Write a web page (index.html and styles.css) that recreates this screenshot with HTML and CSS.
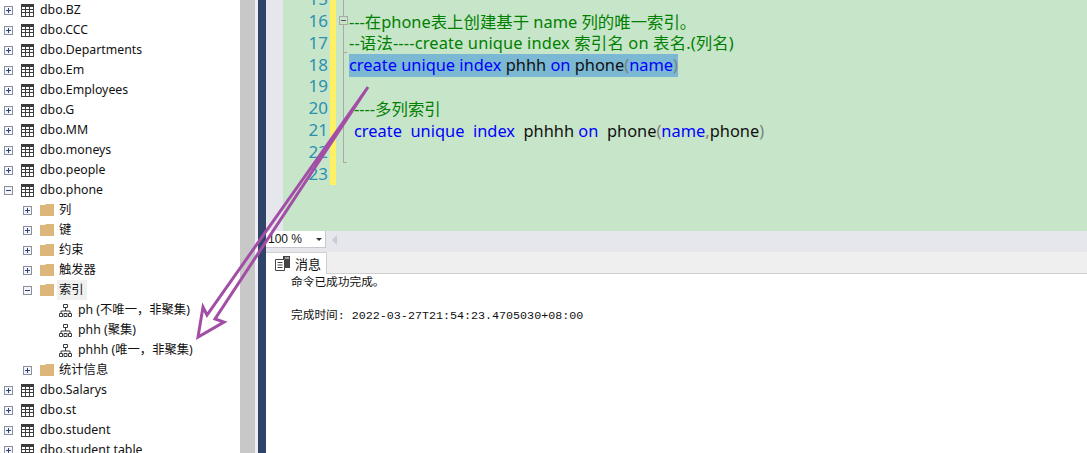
FILE: index.html
```html
<!DOCTYPE html>
<html lang="zh">
<head>
<meta charset="utf-8">
<title>SSMS</title>
<link rel="stylesheet" href="styles.css">
</head>
<body>
<svg width="0" height="0" class="defs">
<defs>
<symbol id="plus" viewBox="0 0 9 9"><rect x=".5" y=".5" width="8" height="8" fill="#f4f5f8" stroke="#8a8f9c"/><path d="M2 4.500H7M4.500 2V7" stroke="#2d3f7c"/></symbol>
<symbol id="minus" viewBox="0 0 9 9"><rect x=".5" y=".5" width="8" height="8" fill="#f4f5f8" stroke="#8a8f9c"/><path d="M2 4.500H7" stroke="#2d3f7c"/></symbol>
<symbol id="table" viewBox="0 0 13 13"><path d="M0 0H13V13H0Z" fill="#3c3c3c"/><path d="M1 3h3v2H1zM5 3h3v2H5zM9 3h3v2H9zM1 6h3v2H1zM5 6h3v2H5zM9 6h3v2H9zM1 9h3v3H1zM5 9h3v3H5zM9 9h3v3H9z" fill="#fff"/></symbol>
<symbol id="folder" viewBox="0 0 14 12"><path d="M0 1.500Q0 1 .5 1H5L6 0H13.500Q14 0 14 .5V11.500Q14 12 13.500 12H.5Q0 12 0 11.500Z" fill="#dcb67a"/></symbol>
<symbol id="idx" viewBox="0 0 13 13"><path d="M4.500 .5h4v3h-4zM.5 9.500h3v3h-3zM5 9.500h3v3H5zM9.500 9.500h3v3h-3zM6.500 3.500V7M2 9.500V7H11V9.500" fill="none" stroke="#3c3c3c"/></symbol>
</defs>
</svg>
<div class="app">
  <aside class="tree">
    <div class="row"><svg class="tog"><use href="#plus"/></svg><svg class="ico"><use href="#table"/></svg><span class="lbl">dbo.BZ</span></div>
    <div class="row"><svg class="tog"><use href="#plus"/></svg><svg class="ico"><use href="#table"/></svg><span class="lbl">dbo.CCC</span></div>
    <div class="row"><svg class="tog"><use href="#plus"/></svg><svg class="ico"><use href="#table"/></svg><span class="lbl">dbo.Departments</span></div>
    <div class="row"><svg class="tog"><use href="#plus"/></svg><svg class="ico"><use href="#table"/></svg><span class="lbl">dbo.Em</span></div>
    <div class="row"><svg class="tog"><use href="#plus"/></svg><svg class="ico"><use href="#table"/></svg><span class="lbl">dbo.Employees</span></div>
    <div class="row"><svg class="tog"><use href="#plus"/></svg><svg class="ico"><use href="#table"/></svg><span class="lbl">dbo.G</span></div>
    <div class="row"><svg class="tog"><use href="#plus"/></svg><svg class="ico"><use href="#table"/></svg><span class="lbl">dbo.MM</span></div>
    <div class="row"><svg class="tog"><use href="#plus"/></svg><svg class="ico"><use href="#table"/></svg><span class="lbl">dbo.moneys</span></div>
    <div class="row"><svg class="tog"><use href="#plus"/></svg><svg class="ico"><use href="#table"/></svg><span class="lbl">dbo.people</span></div>
    <div class="row"><svg class="tog"><use href="#minus"/></svg><svg class="ico"><use href="#table"/></svg><span class="lbl">dbo.phone</span></div>
    <div class="row l1"><svg class="tog"><use href="#plus"/></svg><svg class="ico fold"><use href="#folder"/></svg><span class="lbl">列</span></div>
    <div class="row l1"><svg class="tog"><use href="#plus"/></svg><svg class="ico fold"><use href="#folder"/></svg><span class="lbl">键</span></div>
    <div class="row l1"><svg class="tog"><use href="#plus"/></svg><svg class="ico fold"><use href="#folder"/></svg><span class="lbl">约束</span></div>
    <div class="row l1"><svg class="tog"><use href="#plus"/></svg><svg class="ico fold"><use href="#folder"/></svg><span class="lbl">触发器</span></div>
    <div class="row l1"><svg class="tog"><use href="#minus"/></svg><svg class="ico fold"><use href="#folder"/></svg><span class="lbl sel">索引</span></div>
    <div class="row l2"><svg class="ico"><use href="#idx"/></svg><span class="lbl">ph (不唯一，非聚集)</span></div>
    <div class="row l2"><svg class="ico"><use href="#idx"/></svg><span class="lbl">phh (聚集)</span></div>
    <div class="row l2"><svg class="ico"><use href="#idx"/></svg><span class="lbl">phhh (唯一，非聚集)</span></div>
    <div class="row l1"><svg class="tog"><use href="#plus"/></svg><svg class="ico fold"><use href="#folder"/></svg><span class="lbl">统计信息</span></div>
    <div class="row"><svg class="tog"><use href="#plus"/></svg><svg class="ico"><use href="#table"/></svg><span class="lbl">dbo.Salarys</span></div>
    <div class="row"><svg class="tog"><use href="#plus"/></svg><svg class="ico"><use href="#table"/></svg><span class="lbl">dbo.st</span></div>
    <div class="row"><svg class="tog"><use href="#plus"/></svg><svg class="ico"><use href="#table"/></svg><span class="lbl">dbo.student</span></div>
    <div class="row"><svg class="tog"><use href="#plus"/></svg><svg class="ico"><use href="#table"/></svg><span class="lbl">dbo.student table</span></div>
  </aside>
  <div class="scroll"></div>
  <div class="split"></div>
  <main class="main">
    <section class="editor">
      <div class="margin"></div>
      <div class="gutter">
        <div class="num">15</div><div class="num">16</div><div class="num">17</div><div class="num">18</div><div class="num">19</div><div class="num">20</div><div class="num">21</div><div class="num">22</div><div class="num">23</div>
      </div>
      <div class="yellow"></div>
      <div class="foldcol"><span class="foldtop"></span><span class="foldbox"></span><span class="foldline"></span><span class="foldtick"></span></div>
      <div class="code">
        <div class="ln c"><span>---在phone表上创建基于 name 列的唯一索引。</span></div>
        <div class="ln c wide"><span>--语法----create unique index 索引名 on 表名.(列名)</span></div>
        <div class="ln"><span class="hl"><b>create unique index</b> phhh <b>on</b> phone<i>(</i><b>name</b><i>)</i></span></div>
        <div class="ln"></div>
        <div class="ln c in"><span>----多列索引</span></div>
        <div class="ln in"><span><b>create</b>&nbsp; <b>unique</b>&nbsp; <b>index</b>&nbsp; phhhh <b>on</b>&nbsp; phone<i>(</i><b>name</b><i>,</i>phone<i>)</i></span></div>
      </div>
    </section>
    <div class="zoombar"><div class="zoomsel"><span>100 %</span><span class="caret"></span></div><span class="left"></span></div>
    <div class="tabs"><div class="tab"><svg class="msg" viewBox="0 0 15 15"><path d="M.5 3.500h9v11h-9z" fill="#fff" stroke="#444"/><path d="M2.500 6.500h5M2.500 9h5M2.500 11.500h5" stroke="#444"/><path d="M8 0h7v12H10V3H8z" fill="#444"/><path d="M10 2h4" stroke="#fff"/></svg><span>消息</span></div></div>
    <div class="out">
      <div class="oline">命令已成功完成。</div>
      <div class="oline">完成时间: 2022-03-27T21:54:23.4705030+08:00</div>
    </div>
  </main>
</div>
<svg class="arrow" width="1087" height="453" viewBox="0 0 1087 453">
  <path d="M368 87 L207 315 L203 307 L198 337 L224 322 L215 319 Z" fill="none" stroke="#a24ea6" stroke-width="3" stroke-linejoin="miter"/>
</svg>
</body>
</html>
```
FILE: styles.css
```css
* { box-sizing: border-box; }
html, body { margin: 0; height: 100%; overflow: hidden; background: #fff; }
.defs { position: absolute; }
.app { display: flex; height: 453px; width: 1087px; font-family: "Noto Sans", "Noto Sans CJK SC", sans-serif; }
.tree { width: 240px; flex: none; background: #fff; overflow: hidden; font-size: 12.3px; color: #111; }
.row { height: 20px; display: flex; align-items: center; padding-left: 4px; white-space: nowrap; }
.row.l1 { padding-left: 23px; }
.row.l2 { padding-left: 59px; }
.tog { width: 9px; height: 9px; flex: none; margin-right: 8px; }
.ico { width: 13px; height: 13px; flex: none; margin-right: 4px; }
.ico.fold { width: 14px; height: 12px; margin-right: 3px; }
.lbl { line-height: 20px; padding: 0 3px 0 2px; }
.lbl.sel { background: #f0f0f0; }
.scroll { width: 15px; flex: none; background: #c8c8c8; }
.split { width: 11px; flex: none; background: #2f4468; border-left: 3px solid #eef0f4; }
.main { flex: 1; display: flex; flex-direction: column; min-width: 0; }
.editor { height: 231px; flex: none; display: flex; background: #c7e5c9; overflow: hidden; }
.margin { width: 17px; flex: none; background: #e6e7ec; }
.gutter { width: 47px; flex: none; font-size: 17px; color: #2b91af; text-align: right; margin-top: -12px; }
.num { height: 21.85px; line-height: 21.85px; padding-right: 2px; }
.yellow { width: 6px; height: 185px; flex: none; background: #fff064; }
.foldcol { width: 13px; flex: none; position: relative; }
.foldtop { position: absolute; left: 7px; top: 0; width: 1px; height: 16px; background: #a9a9a9; }
.foldline { position: absolute; left: 7px; top: 25px; width: 1px; height: 137px; background: #a9a9a9; }
.foldtick { position: absolute; left: 7px; top: 52px; width: 4px; height: 111px; border: solid #a9a9a9; border-width: 1px 0; }
.foldbox { position: absolute; left: 3px; top: 16px; width: 9px; height: 9px; border: 1px solid #a9a9a9; background: linear-gradient(#555, #555) center / 5px 1px no-repeat; }
.code { padding-top: 10.5px; font-size: 16.4px; white-space: nowrap; color: #111; }
.ln { height: 21.85px; line-height: 21.85px; }
.ln.c { color: #008000; }
.ln.wide { letter-spacing: .15px; }
.ln.in { padding-left: 5px; }
.ln b { font-weight: normal; color: #0000ff; }
.ln i { font-style: normal; color: #808080; }
.hl { display: inline-block; height: 23px; background: #7ab8d4; }
.zoombar { height: 21px; flex: none; background: #e6e7ec; display: flex; align-items: flex-start; gap: 6px; }
.zoomsel { width: 60px; height: 17px; background: #fff; border: 1px solid #c8c8d0; border-left: 0; border-top: 0; font-family: "Liberation Sans", sans-serif; font-size: 12px; display: flex; align-items: center; justify-content: space-between; padding: 0 3px 0 2px; color: #111; }
.caret { width: 0; height: 0; border: 3px solid transparent; border-top: 3px solid #333; margin-top: 3px; }
.left { width: 0; height: 0; border: 5px solid transparent; border-right: 5px solid #c9cbd1; border-left: 0; margin-top: 4px; }
.tabs { height: 22px; flex: none; background: #efefef; border-bottom: 1px solid #cfcfcf; }
.tab { width: 61px; height: 22px; background: #fff; border: 1px solid #cfcfcf; border-bottom: 0; border-left: 0; display: flex; align-items: center; gap: 5px; padding-left: 9px; font-size: 13px; color: #111; }
.msg { width: 15px; height: 15px; flex: none; }
.out { flex: 1; background: #fff; padding: 1px 0 0 25px; font-family: "Liberation Mono", "Noto Sans CJK SC", monospace; font-size: 11.7px; color: #111; }
.oline { height: 16px; line-height: 16px; }
.oline + .oline { margin-top: 17px; }
.arrow { position: absolute; left: 0; top: 0; pointer-events: none; }
```
